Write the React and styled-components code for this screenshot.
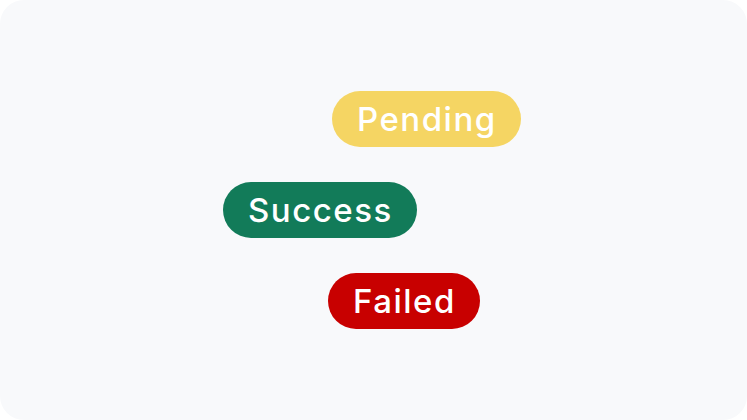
import React from "react";
import styled, { createGlobalStyle } from "styled-components";

const GlobalStyle = createGlobalStyle`
  html, body {
    margin: 0;
    padding: 0;
    background: #ffffff;
  }
`;

const Card = styled.div`
  width: 747px;
  height: 420px;
  box-sizing: border-box;
  border-radius: 24px;
  background: #f8f9fb;
  display: flex;
  flex-direction: column;
  justify-content: center;
  align-items: flex-start;
  gap: 35px;
  font-family: "Inter", "Liberation Sans", sans-serif;
`;

const tones = {
  pending: "#f5d563",
  success: "#127b59",
  failed: "#c80000"
};

const Pill = styled.span`
  display: inline-flex;
  align-items: center;
  justify-content: center;
  height: 56px;
  padding: 0 24px 0 25px;
  margin-left: ${(p) => p.offset}px;
  border-radius: 28px;
  background: ${(p) => tones[p.tone]};
  color: #ffffff;
  font-size: 33px;
  font-weight: 500;
  letter-spacing: 1.5px;
  line-height: 1;
`;

const statuses = [
  { label: "Pending", tone: "pending", offset: 332 },
  { label: "Success", tone: "success", offset: 223 },
  { label: "Failed", tone: "failed", offset: 328 }
];

const App = () => (
  <>
    <GlobalStyle />
    <Card>
      {statuses.map((s) => (
        <Pill key={s.label} tone={s.tone} offset={s.offset}>
          {s.label}
        </Pill>
      ))}
    </Card>
  </>
);

export default App;
